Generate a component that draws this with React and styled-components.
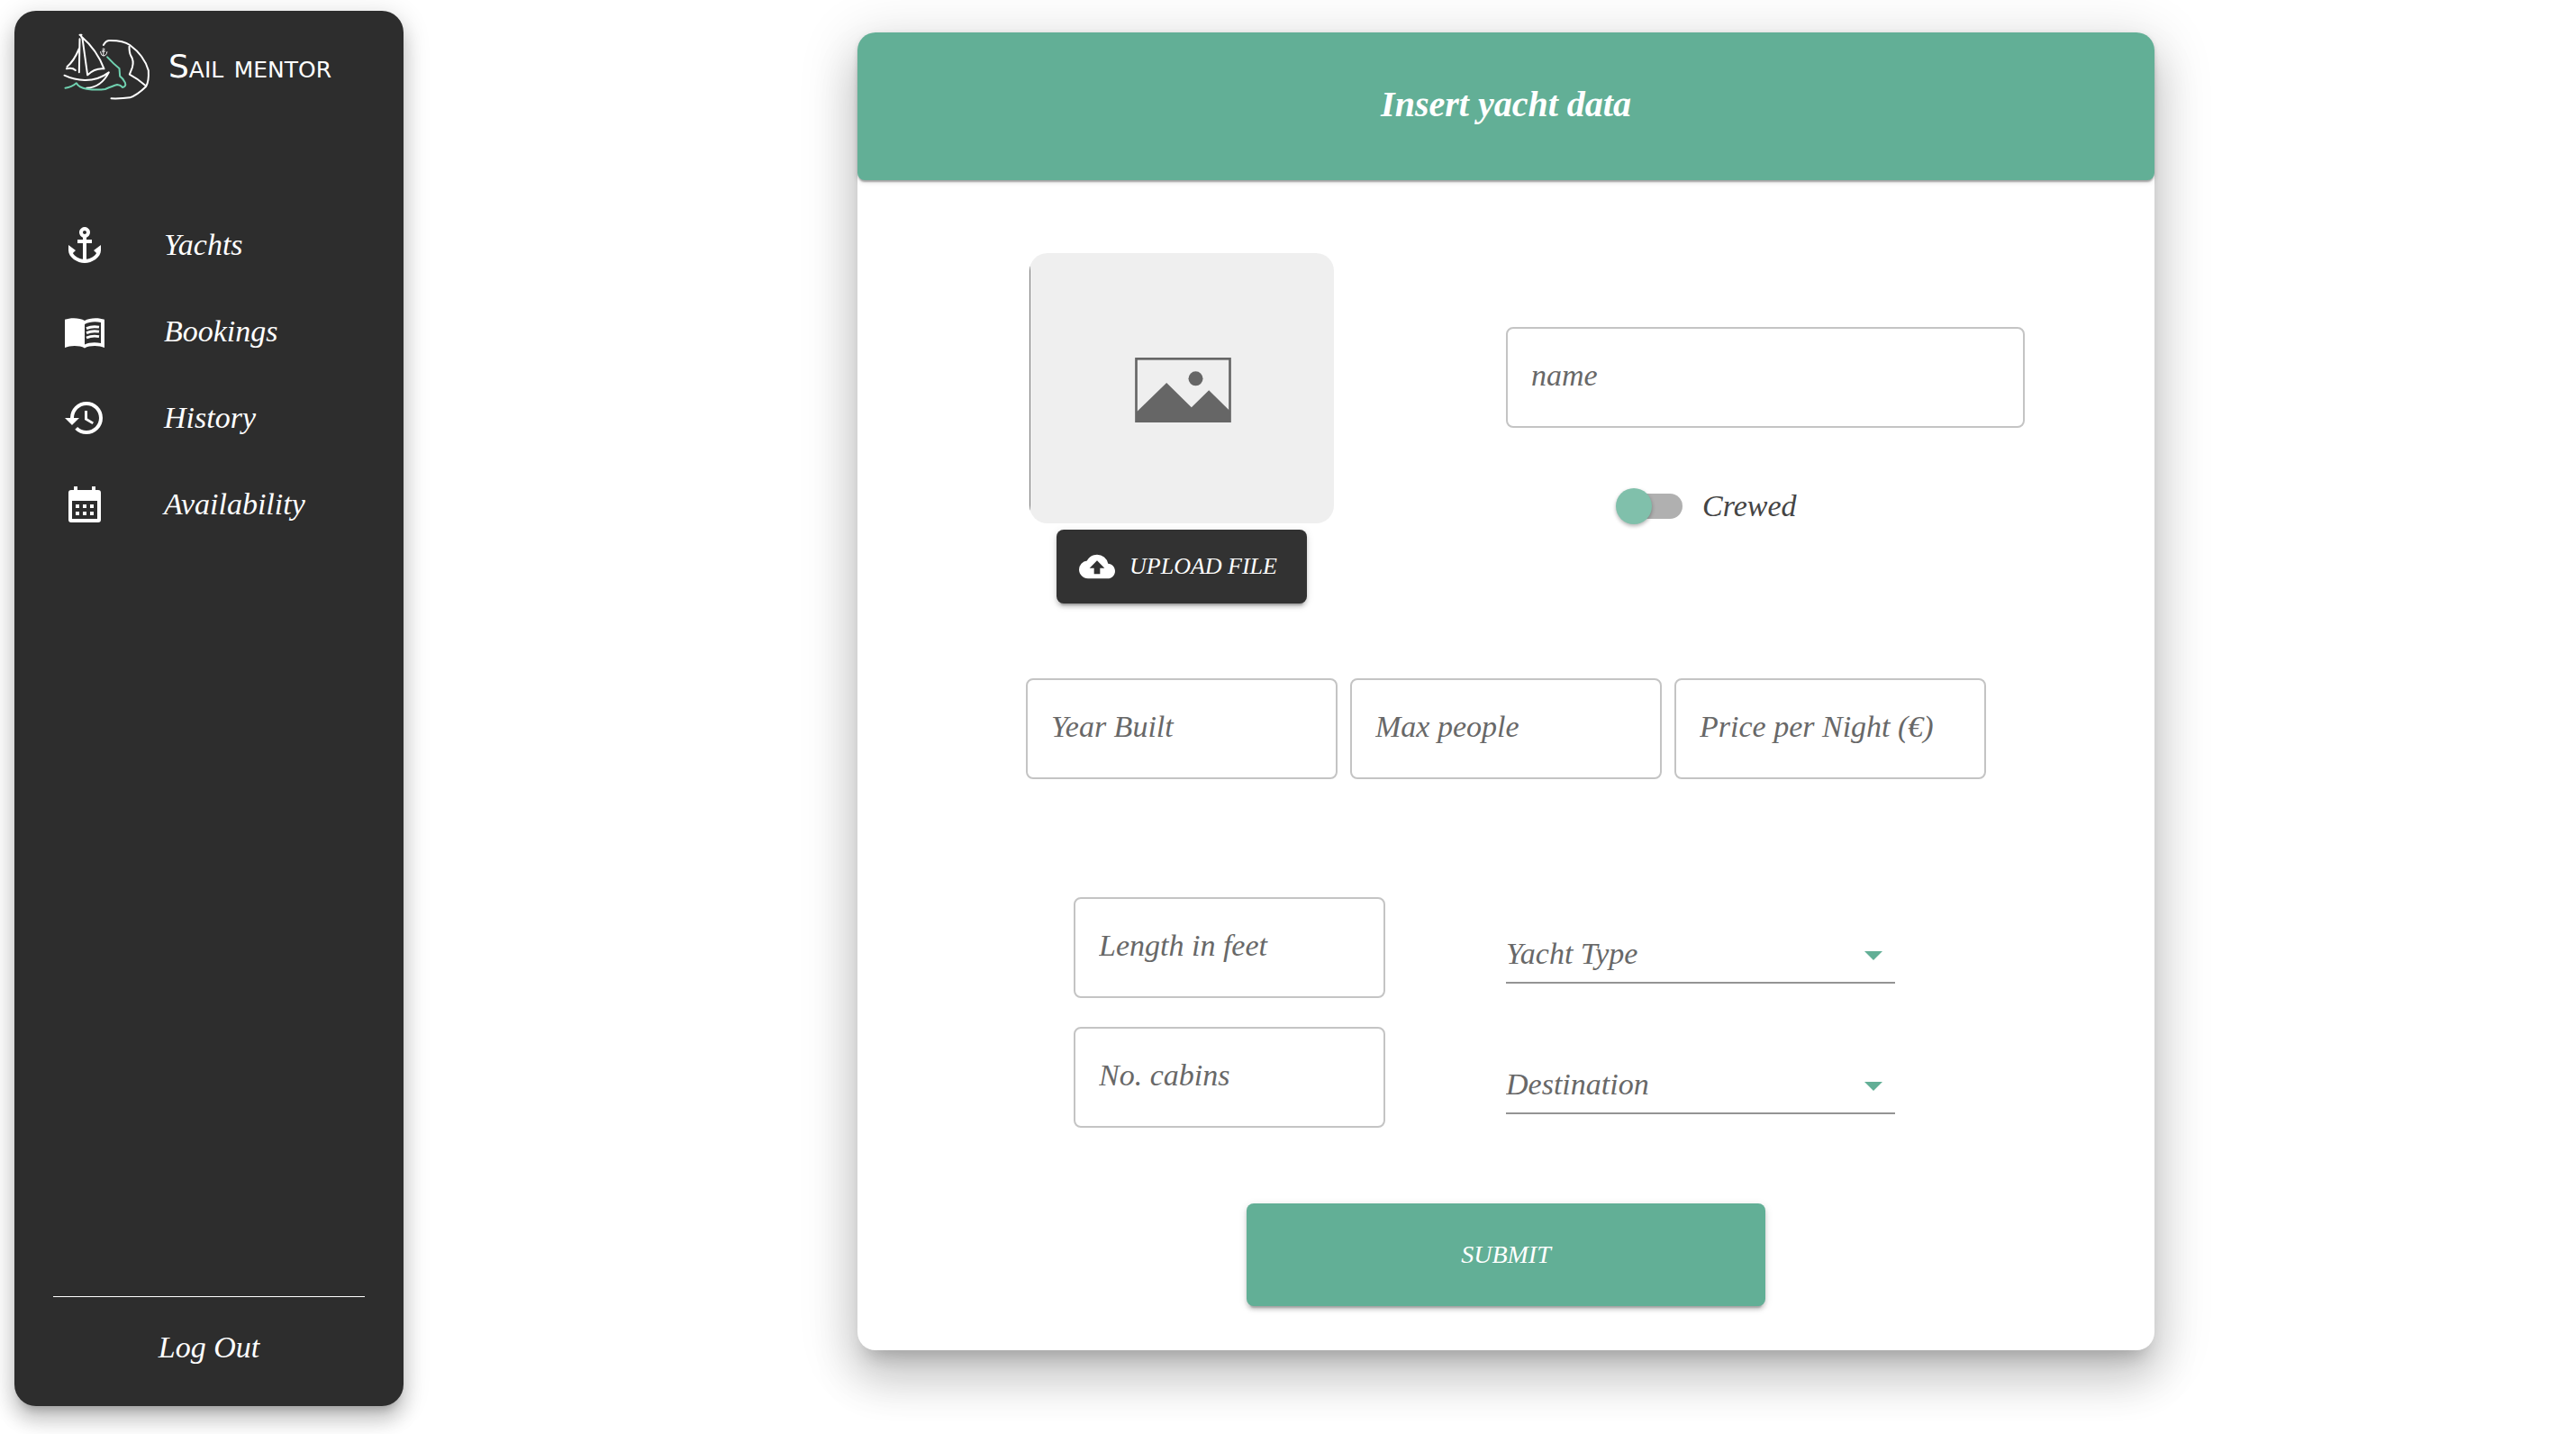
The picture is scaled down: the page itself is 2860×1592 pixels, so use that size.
import React, { useState } from "react";
import styled, { createGlobalStyle } from "styled-components";
import { MdAnchor, MdHistory, MdCloudUpload } from "react-icons/md";

const green = "#62af96";
const serif = '"Liberation Serif", "Times New Roman", serif';

const GlobalStyle = createGlobalStyle`
  *, *::before, *::after { box-sizing: border-box; }
  body {
    margin: 0;
    background: #fff;
    font-family: ${serif};
    font-style: italic;
    font-size: 34px;
    line-height: 40px;
  }
  button, input, select { font: inherit; }
`;

const Page = styled.div`
  display: flex;
  min-height: 100vh;
`;

const Sidebar = styled.aside`
  display: flex;
  flex-direction: column;
  flex: 0 0 432px;
  margin: 12px 0 31px 16px;
  border-radius: 24px;
  background: #2d2d2d;
  color: #fff;
  box-shadow: 0 10px 10px -6px rgba(0, 0, 0, 0.2), 0 16px 20px 2px rgba(0, 0, 0, 0.14),
    0 6px 28px 4px rgba(0, 0, 0, 0.12);
`;

const Brand = styled.div`
  display: flex;
  align-items: center;
  gap: 20px;
  padding: 24px 24px 0 54px;
  margin-bottom: 112px;
`;

const Wordmark = styled.span`
  font-family: "DejaVu Sans", sans-serif;
  font-style: normal;
  font-size: 36px;
  font-variant: small-caps;
  white-space: nowrap;
`;

const Nav = styled.nav`
  display: flex;
  flex-direction: column;
  flex: 1;
`;

const NavLink = styled.a`
  display: flex;
  align-items: center;
  gap: 64px;
  height: 96px;
  padding: 0 54px;
  color: inherit;
  text-decoration: none;

  svg { flex: none; }
`;

const SidebarFooter = styled.div`
  display: flex;
  justify-content: center;
  margin: 0 43px;
  padding: 36px 0 45px;
  border-top: 1px solid #fff;
`;

const LogOut = styled.button`
  padding: 0;
  border: 0;
  background: none;
  color: inherit;
  cursor: pointer;
`;

const Main = styled.main`
  flex: 1;
  min-width: 0;
  padding: 36px 0 93px 36px;
`;

const Card = styled.form`
  max-width: 1440px;
  margin: 0 auto;
  border-radius: 20px;
  background: #fff;
  box-shadow: 0 16px 20px -10px rgba(0, 0, 0, 0.2), 0 32px 48px 4px rgba(0, 0, 0, 0.14),
    0 12px 60px 10px rgba(0, 0, 0, 0.12);
`;

const CardHeader = styled.header`
  display: flex;
  align-items: center;
  justify-content: center;
  height: 164px;
  border-radius: 20px 20px 8px 8px;
  background: ${green};
  box-shadow: 0 4px 2px -2px rgba(0, 0, 0, 0.2), 0 2px 2px rgba(0, 0, 0, 0.14),
    0 2px 6px rgba(0, 0, 0, 0.12);
`;

const Title = styled.h1`
  margin: 0;
  padding-bottom: 4px;
  color: #fff;
  font-size: 40px;
  font-weight: 700;
  line-height: 48px;
`;

const CardBody = styled.div`
  display: flex;
  flex-direction: column;
  align-items: center;
  gap: 83px;
  padding: 81px 0 49px;
`;

const SplitRow = styled.div`
  display: grid;
  grid-template-columns: 1fr 1fr;
  width: 100%;
`;

const PhotoColumn = styled.div`
  display: flex;
  flex-direction: column;
  align-items: center;
  gap: 7px;
`;

const PhotoFrame = styled.div`
  display: grid;
  place-items: center;
  width: 338px;
  height: 300px;
  padding: 4px 0 0 2px;
  border-radius: 20px;
  background: linear-gradient(#777, #777) left / 1px 100% no-repeat #efefef;
`;

const Button = styled.button`
  display: flex;
  align-items: center;
  justify-content: center;
  gap: 16px;
  border: 0;
  border-radius: 8px;
  color: #fff;
  text-transform: uppercase;
  cursor: pointer;
  box-shadow: 0 6px 2px -4px rgba(0, 0, 0, 0.2), 0 4px 4px rgba(0, 0, 0, 0.14),
    0 2px 10px rgba(0, 0, 0, 0.12);
`;

const UploadButton = styled(Button)`
  min-width: 278px;
  height: 82px;
  padding: 0 32px 0 24px;
  background: #323232;
  font-size: 26px;
`;

const SubmitButton = styled(Button)`
  width: 40%;
  height: 114px;
  background: ${green};
  font-size: 28px;
`;

const NameColumn = styled.div`
  display: flex;
  flex-direction: column;
  gap: 67px;
  padding-top: 82px;
`;

const Field = styled.input`
  width: ${(p) => p.$width};
  height: 112px;
  padding: 0 26px 4px;
  border: 2px solid #c4c4c4;
  border-radius: 8px;
  background: #fff;
  color: #212121;

  &::placeholder {
    color: #686868;
    opacity: 1;
  }
`;

const SwitchLabel = styled.label`
  display: flex;
  align-items: center;
  gap: 22px;
  padding-left: 128px;
  color: #444;
  cursor: pointer;
`;

const Switch = styled.input`
  display: flex;
  align-items: center;
  appearance: none;
  width: 68px;
  height: 28px;
  margin: 0;
  border-radius: 14px;
  background: #b0b0b0;
  cursor: pointer;

  &::before {
    content: "";
    flex: none;
    width: 40px;
    height: 40px;
    margin-left: -6px;
    border-radius: 50%;
    background: #80c0ab;
    box-shadow: 0 2px 4px rgba(0, 0, 0, 0.3);
  }

  &:checked::before {
    margin-left: 34px;
  }
`;

const FieldRow = styled.div`
  display: flex;
  gap: 14px;
`;

const DetailsRow = styled(SplitRow)`
  margin: 48px 0 1px;
`;

const FieldStack = styled.div`
  display: flex;
  flex-direction: column;
  gap: 32px;
  padding-left: 240px;
`;

const SelectStack = styled.div`
  display: flex;
  flex-direction: column;
  gap: 81px;
  padding-top: 32px;
`;

const SelectBox = styled.div`
  display: grid;
  align-items: center;
  width: 60%;
  border-bottom: 2px solid #949494;

  > * { grid-area: 1 / 1; }

  svg {
    justify-self: end;
    margin: 4px 14px 0 0;
    pointer-events: none;
  }
`;

const Select = styled.select`
  appearance: none;
  width: 100%;
  height: 62px;
  padding: 0;
  border: 0;
  background: none;
  color: #686868;
`;

const Logo = () => (
  <svg width="97" height="76" viewBox="210 108 290 228" fill="none" stroke="#fff" strokeWidth="6" strokeLinecap="round" strokeLinejoin="round" aria-hidden="true">
    <path d="M265 116h6M265 130L263 241M263 162Q246 203 223 222M221 229Q240 224 251 234" />
    <path d="M268 118L274 128L291 250Q315 226 346 229Q322 166 272 123" />
    <path d="M214 251C250 268 310 280 362 241C342 280 315 292 288 293" />
    <path stroke="#70d1b0" d="M217 293Q238 291 254 277Q262 292 288 296Q320 301 350 297Q375 286 390 282Q401 283 408 291Q421 288 416 275Q410 262 399 254L397 228Q378 213 357 190" />
    <path d="M344 150Q352 136 362 135Q410 134 432 150Q480 185 494 235Q496 270 486 288Q455 318 432 325Q405 329 370 328" />
    <path d="M430 155Q430 175 435 185Q447 203 440 225L431 248Q460 263 485 286" />
    <path strokeWidth="3" d="M344 168V185M334 173Q336 186 344 186Q354 186 356 173M339 171h10" />
    <circle strokeWidth="2" cx="344" cy="164" r="3" />
  </svg>
);

const BookIcon = () => (
  <svg width="48" height="48" viewBox="0 0 24 24" fill="#fff" aria-hidden="true">
    <path
      fillRule="evenodd"
      d="M1 5.4C4 4.2 9.3 4.2 12 6C14.7 4.2 20 4.2 23 5.4V21C20 19.6 14.7 19.6 12 21.2C9.3 19.6 4 19.6 1 21ZM12 8V19.2C14.3 18 18 17.8 21 18.5V7C18 6.400 14.3 6.6 12 8Z"
    />
    <path
      d="M13 10.3C15 9.4 17.7 9.2 20 9.6M13 12.8C15 11.9 17.7 11.7 20 12.1M13 15.5C15 14.6 17.7 14.4 20 14.8"
      fill="none"
      stroke="#fff"
      strokeWidth="1.4"
    />
  </svg>
);

const CalendarIcon = () => (
  <svg width="48" height="48" viewBox="0 0 24 24" fill="#fff" aria-hidden="true">
    <path fillRule="evenodd" d="M6 2h2v2h8V2h2v2h1.5A1.5 1.5 0 0 1 21 5.5v15a1.5 1.5 0 0 1-1.5 1.5h-15A1.5 1.5 0 0 1 3 20.5v-15A1.5 1.5 0 0 1 4.5 4H6zM5 10v10h14V10z" />
    <path d="M7 12h2v2H7zM11 12h2v2h-2zM15 12h2v2h-2zM7 16h2v2H7zM11 16h2v2h-2zM15 16h2v2h-2z" />
  </svg>
);

const PhotoPlaceholder = () => (
  <svg width="107" height="72" viewBox="0 0 320 216" fill="#666" role="img" aria-label="Yacht photo">
    <rect x="4" y="4" width="312" height="208" fill="none" stroke="#666" strokeWidth="8" />
    <path d="M4 182L105 84L188 166L246 109L316 178V212H4Z" />
    <circle cx="202" cy="70" r="24" />
  </svg>
);

const links = [
  { label: "Yachts", icon: <MdAnchor size={48} /> },
  { label: "Bookings", icon: <BookIcon /> },
  { label: "History", icon: <MdHistory size={48} /> },
  { label: "Availability", icon: <CalendarIcon /> },
];

const TextField = ({ label, width = "346px" }) => (
  <Field type="text" placeholder={label} aria-label={label} $width={width} />
);

const SelectField = ({ label }) => (
  <SelectBox>
    <Select aria-label={label} defaultValue="">
      <option value="">{label}</option>
    </Select>
    <svg width="20" height="10" viewBox="0 0 20 10" fill={green} aria-hidden="true">
      <path d="M0 0h20L10 10z" />
    </svg>
  </SelectBox>
);

export default function App() {
  const [crewed, setCrewed] = useState(false);

  return (
    <>
      <GlobalStyle />
      <Page>
        <Sidebar>
          <Brand>
            <Logo />
            <Wordmark>Sail mentor</Wordmark>
          </Brand>
          <Nav>
            {links.map(({ label, icon }) => (
              <NavLink key={label} href="#">
                {icon}
                {label}
              </NavLink>
            ))}
          </Nav>
          <SidebarFooter>
            <LogOut type="button">Log Out</LogOut>
          </SidebarFooter>
        </Sidebar>

        <Main>
          <Card onSubmit={(e) => e.preventDefault()}>
            <CardHeader>
              <Title>Insert yacht data</Title>
            </CardHeader>
            <CardBody>
              <SplitRow>
                <PhotoColumn>
                  <PhotoFrame>
                    <PhotoPlaceholder />
                  </PhotoFrame>
                  <UploadButton type="button">
                    <MdCloudUpload size={40} />
                    Upload file
                  </UploadButton>
                </PhotoColumn>
                <NameColumn>
                  <TextField label="name" width="80%" />
                  <SwitchLabel>
                    <Switch
                      type="checkbox"
                      role="switch"
                      checked={crewed}
                      onChange={(e) => setCrewed(e.target.checked)}
                    />
                    Crewed
                  </SwitchLabel>
                </NameColumn>
              </SplitRow>

              <FieldRow>
                <TextField label="Year Built" />
                <TextField label="Max people" />
                <TextField label="Price per Night (€)" />
              </FieldRow>

              <DetailsRow>
                <FieldStack>
                  <TextField label="Length in feet" />
                  <TextField label="No. cabins" />
                </FieldStack>
                <SelectStack>
                  <SelectField label="Yacht Type" />
                  <SelectField label="Destination" />
                </SelectStack>
              </DetailsRow>

              <SubmitButton type="submit">Submit</SubmitButton>
            </CardBody>
          </Card>
        </Main>
      </Page>
    </>
  );
}
